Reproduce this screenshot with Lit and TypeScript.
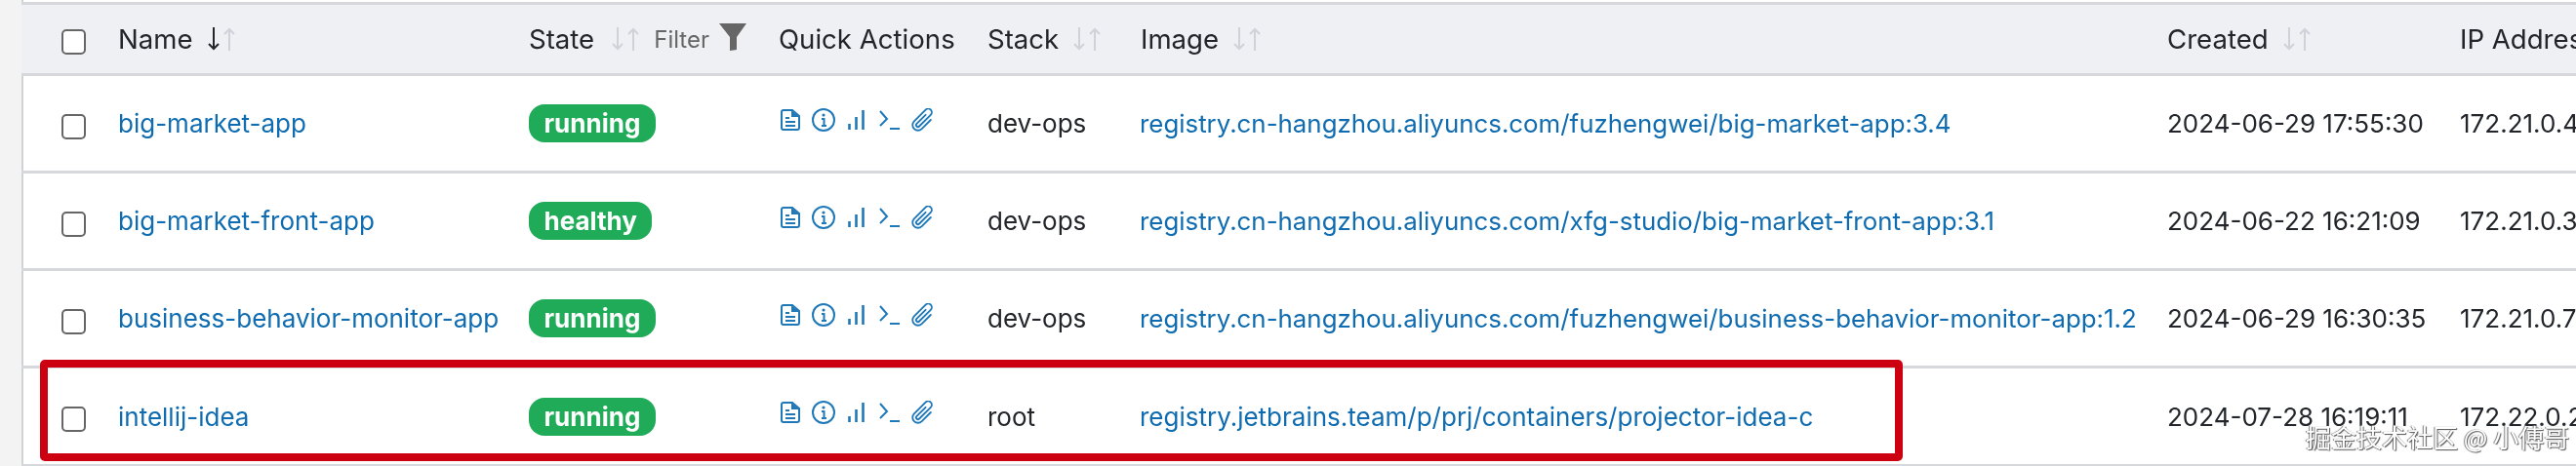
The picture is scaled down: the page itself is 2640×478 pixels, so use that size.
import { LitElement, html, css } from "lit";
import { customElement } from "lit/decorators.js";
import { classMap } from "lit/directives/class-map.js";

interface Row { name: string; state: string; stack: string; image: string; created: string; ip: string; }

const ROWS: Row[] = [
  { name: "big-market-app", state: "running", stack: "dev-ops", image: "registry.cn-hangzhou.aliyuncs.com/fuzhengwei/big-market-app:3.4", created: "2024-06-29 17:55:30", ip: "172.21.0.4" },
  { name: "big-market-front-app", state: "healthy", stack: "dev-ops", image: "registry.cn-hangzhou.aliyuncs.com/xfg-studio/big-market-front-app:3.1", created: "2024-06-22 16:21:09", ip: "172.21.0.3" },
  { name: "business-behavior-monitor-app", state: "running", stack: "dev-ops", image: "registry.cn-hangzhou.aliyuncs.com/fuzhengwei/business-behavior-monitor-app:1.2", created: "2024-06-29 16:30:35", ip: "172.21.0.7" },
  { name: "intellij-idea", state: "running", stack: "root", image: "registry.jetbrains.team/p/prj/containers/projector-idea-c", created: "2024-07-28 16:19:11", ip: "172.22.0.2" },
];

const arrows = (active: boolean) => html`<svg class="sort" viewBox="0 0 30 24" fill="none" stroke-width="2">
  <path d="M7 0v22M2 17l5 5 5-5" stroke=${active ? "#22252a" : "#cfd2d8"}/>
  <path d="M23 24V2M18 7l5-5 5 5" stroke="#cfd2d8"/>
</svg>`;

const icons = html`
  <svg viewBox="0 0 24 24" fill="none">
    <path d="M5 2h9l7 6v12a2 2 0 0 1-2 2H5a2 2 0 0 1-2-2V4a2 2 0 0 1 2-2z" stroke="currentColor" stroke-width="2"/>
    <path d="M13 2v7h8z" fill="currentColor"/>
    <path d="M7 10h4M7 14h10M7 18h10" stroke="currentColor" stroke-width="2"/>
  </svg>
  <svg viewBox="0 0 24 24" fill="none">
    <circle cx="12" cy="12" r="11" stroke="currentColor" stroke-width="2"/>
    <circle cx="12" cy="7" r="1.6" fill="currentColor"/>
    <path d="M10 11h2.5v7M10 18h5" stroke="currentColor" stroke-width="2"/>
  </svg>
  <svg viewBox="0 0 24 24" fill="none" stroke="currentColor" stroke-width="2.6">
    <path d="M4.5 16v6M11.5 9v13M18.5 2v20"/>
  </svg>
  <svg viewBox="0 0 24 24" fill="none" stroke="currentColor" stroke-width="2">
    <path d="M2 3l7 8-7 7M12 21h10"/>
  </svg>
  <svg viewBox="1.5 1.5 13 13" fill="currentColor">
    <g transform="rotate(45 8 8)">
      <path d="M4.5 3a2.5 2.5 0 0 1 5 0v9a1.5 1.5 0 0 1-3 0V5a.5.5 0 0 1 1 0v7a.5.5 0 0 0 1 0V3a1.5 1.5 0 1 0-3 0v9a2.5 2.5 0 0 0 5 0V5a.5.5 0 0 1 1 0v7a3.5 3.5 0 1 1-7 0V3z"/>
    </g>
  </svg>`;

@customElement("app-root")
export class AppRoot extends LitElement {
  static styles = css`
    :host {
      display: block;
      width: 2640px;
      height: 478px;
      position: relative;
      overflow: hidden;
      background: #f3f3f4;
      font-family: Inter, "Noto Sans", sans-serif;
      font-size: 26px;
      color: #22252a;
      filter: blur(0.4px);
      --cols: 99px 421px 256px 214px 157px 1052px 300px 200px;
    }
    .table {
      margin-left: 22px;
      width: 2618px;
      height: 478px;
      border-left: 2px solid #d0d3d6;
      box-sizing: border-box;
      padding-top: 2px;
      background: #fff;
    }
    .row {
      display: grid;
      grid-template-columns: var(--cols);
      margin-left: -2px;
      align-items: center;
      height: 100px;
      box-sizing: border-box;
      border-bottom: 3px solid #d6d8db;
      white-space: nowrap;
    }
    .row:last-child { border-bottom-width: 2px; }
    .head {
      height: 76px;
      background: #eff0f4;
      border-top: 3px solid #d6d8db;
      border-bottom: 3px solid #d6d8db;
      font-size: 27.6px;
    }
    .check {
      width: 25px;
      height: 26px;
      box-sizing: border-box;
      border: 2px solid #666;
      border-radius: 5px;
      background: #fff;
      margin: 6px 0 0 41px;
    }
    .th { display: flex; align-items: center; }
    .sort { width: 30px; height: 24px; margin-left: 14px; flex: none; }
    .state .sort { margin-left: 17px; }
    .filter { color: #666; font-size: 24px; margin-left: 14px; }
    .funnel { width: 28px; height: 28px; margin: -4px 0 0 10px; color: #666; }
    a { color: #0f6cb0; text-decoration: none; }
    .image { font-size: 25.87px; margin-left: -1px; }
    .image.wide { font-size: 26px; }
    .badge {
      display: inline-block;
      background: #1fab58;
      color: #fff;
      font-weight: 700;
      line-height: 39px;
      height: 39px;
      padding: 0 15.5px;
      border-radius: 16px;
    }
    .actions {
      display: flex;
      gap: 10px;
      color: #1f78b8;
      padding-bottom: 8px;
    }
    .actions svg { width: 24px; height: 24px; display: block; }
    .highlight {
      position: absolute;
      left: 41px;
      top: 369px;
      width: 1909px;
      height: 104px;
      box-sizing: border-box;
      border: 8px solid #cc0011;
      border-radius: 5px;
    }
    .mark {
      position: absolute;
      left: 2363px;
      top: 434px;
      font-family: "Noto Sans CJK SC", sans-serif;
      font-size: 26px;
      line-height: 28px;
      white-space: nowrap;
      color: #fff;
      text-shadow: 1px 1px 1px #555, -1px 0 1px #777;
    }
  `;

  render() {
    return html`
      <div class="table">
        <div class="row head">
          <div class="check"></div>
          <div class="th">Name${arrows(true)}</div>
          <div class="th state">State${arrows(false)}<span class="filter">Filter</span>
            <svg class="funnel" viewBox="0 0 28 28" fill="currentColor"><path d="M0 0h28L18 14v13l-7 1V14z"/></svg>
          </div>
          <div class="th">Quick Actions</div>
          <div class="th">Stack${arrows(false)}</div>
          <div class="th">Image${arrows(false)}</div>
          <div class="th">Created${arrows(false)}</div>
          <div class="th">IP Address</div>
        </div>
        ${ROWS.map((r) => html`
          <div class="row">
            <div class="check"></div>
            <a href="#">${r.name}</a>
            <div><span class="badge">${r.state}</span></div>
            <div class="actions">${icons}</div>
            <div>${r.stack}</div>
            <a class=${classMap({ image: true, wide: r.stack === "root" })} href="#">${r.image}</a>
            <div>${r.created}</div>
            <div>${r.ip}</div>
          </div>`)}
      </div>
      <div class="highlight"></div>
      <div class="mark">掘金技术社区 @ 小傅哥</div>
    `;
  }
}
